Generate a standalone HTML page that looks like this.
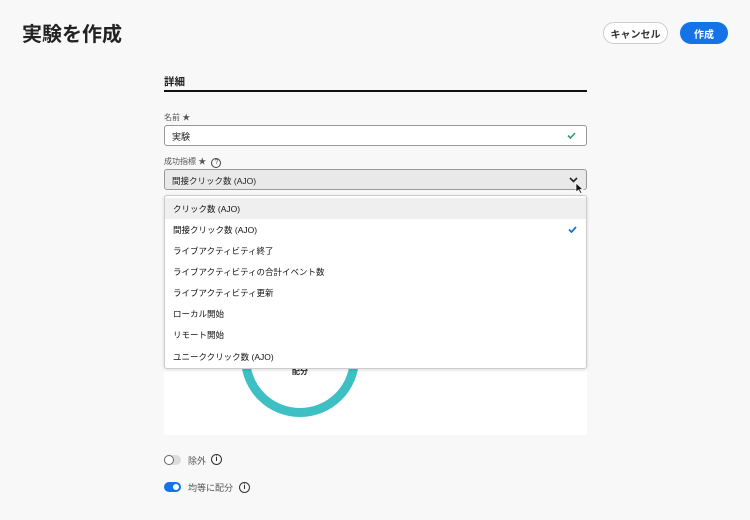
<!DOCTYPE html>
<html><head><meta charset="utf-8"><style>
*{box-sizing:border-box;margin:0;padding:0}
body{width:750px;height:520px;background:#f8f8f8;font-family:"Liberation Sans","Noto Sans CJK JP",sans-serif;color:#222;position:relative;overflow:hidden}
.abs{position:absolute}
h1{position:absolute;left:22px;top:18px;font-size:20px;font-weight:bold;color:#222}
.btn{position:absolute;top:22px;height:22px;border-radius:11px;font-size:10px;font-weight:bold;display:flex;align-items:center;justify-content:center}
.lbl{font-size:8px;color:#555}
.item{position:absolute;left:0;width:100%;height:21px;font-size:8.5px;padding-left:8px;display:flex;align-items:center;color:#111}
</style></head><body>
<h1>実験を作成</h1>
<div class="btn" style="left:603px;width:65px;border:1.5px solid #ccc;background:#fff;color:#333">キャンセル</div>
<div class="btn" style="left:680px;width:48px;background:#1473e6;color:#fff">作成</div>

<div class="abs" style="left:164px;top:74px;font-size:10.5px;font-weight:bold">詳細</div>
<div class="abs" style="left:164px;top:90px;width:423px;height:2px;background:#111"></div>

<div class="abs lbl" style="left:164px;top:112px">名前 ★</div>
<div class="abs" style="left:164px;top:125px;width:423px;height:21px;border:1px solid #999;background:#fff;border-radius:3px;font-size:9px;padding:4px 7px">実験<svg style="position:absolute;right:10px;top:6px" width="9" height="7" viewBox="0 0 9 7"><path d="M1 3.5L3.5 6L8 1" stroke="#2d9d78" stroke-width="1.6" fill="none"/></svg></div>

<div class="abs lbl" style="left:164px;top:156px">成功指標 ★ <span style="display:inline-block;width:10px;height:10px;border:1px solid #444;border-radius:50%;font-size:7px;text-align:center;line-height:8px;margin-left:3px">?</span></div>
<div class="abs" style="left:164px;top:169px;width:423px;height:21px;border:1px solid #999;background:#e9e9e9;border-radius:3px;font-size:8.5px;padding:5px 7px">間接クリック数 (AJO)
<svg style="position:absolute;right:8px;top:7px" width="9" height="6" viewBox="0 0 9 6"><path d="M1 1L4.5 4.5L8 1" stroke="#222" stroke-width="1.6" fill="none"/></svg></div>
<svg class="abs" style="left:575px;top:182px" width="9" height="12" viewBox="0 0 9 12"><path d="M1 1L1 10L3.5 8L5.5 11.5L7 10.8L5 7.5L8 7.5Z" fill="#111" stroke="#fff" stroke-width=".7"/></svg>

<div class="abs" style="left:164px;top:300px;width:423px;height:135px;background:#fff"></div>
<div class="abs" style="left:241px;top:299px;width:118px;height:118px;border:9px solid #3ebfc4;border-radius:50%"></div>
<div class="abs" style="left:292px;top:366px;font-size:8px;font-weight:bold">配分</div>

<div class="abs" style="left:164px;top:195px;width:423px;height:174px;background:#fff;border:1px solid #ccc;border-radius:3px;box-shadow:0 1px 3px rgba(0,0,0,.15)">
<div class="item" style="top:2px;background:#efefef">クリック数 (AJO)</div>
<div class="item" style="top:23px">間接クリック数 (AJO)<svg style="position:absolute;right:9px;top:7px" width="9" height="7" viewBox="0 0 9 7"><path d="M1 3.5L3.5 6L8 1" stroke="#1473e6" stroke-width="1.8" fill="none"/></svg></div>
<div class="item" style="top:44px">ライブアクティビティ終了</div>
<div class="item" style="top:65px">ライブアクティビティの合計イベント数</div>
<div class="item" style="top:86px">ライブアクティビティ更新</div>
<div class="item" style="top:107px">ローカル開始</div>
<div class="item" style="top:128px">リモート開始</div>
<div class="item" style="top:150px">ユニーククリック数 (AJO)</div>
</div>

<div class="abs" style="left:164px;top:455px;width:17px;height:10px;border-radius:5px;background:#ddd"><div style="position:absolute;left:0;top:0;width:10px;height:10px;border-radius:50%;background:#fff;border:1.5px solid #666"></div></div>
<div class="abs" style="left:188px;top:454px;font-size:9px;color:#555">除外</div>
<div class="abs" style="left:211px;top:454px;width:11px;height:11px;border:1.3px solid #333;border-radius:50%;font-size:7px;font-weight:bold;text-align:center;line-height:9px">i</div>

<div class="abs" style="left:164px;top:482px;width:17px;height:10px;border-radius:5px;background:#1473e6"><div style="position:absolute;right:2px;top:2px;width:6px;height:6px;border-radius:50%;background:#fff"></div></div>
<div class="abs" style="left:188px;top:481px;font-size:9px;color:#555">均等に配分</div>
<div class="abs" style="left:239px;top:482px;width:11px;height:11px;border:1.3px solid #333;border-radius:50%;font-size:7px;font-weight:bold;text-align:center;line-height:9px">i</div>
</body></html>
